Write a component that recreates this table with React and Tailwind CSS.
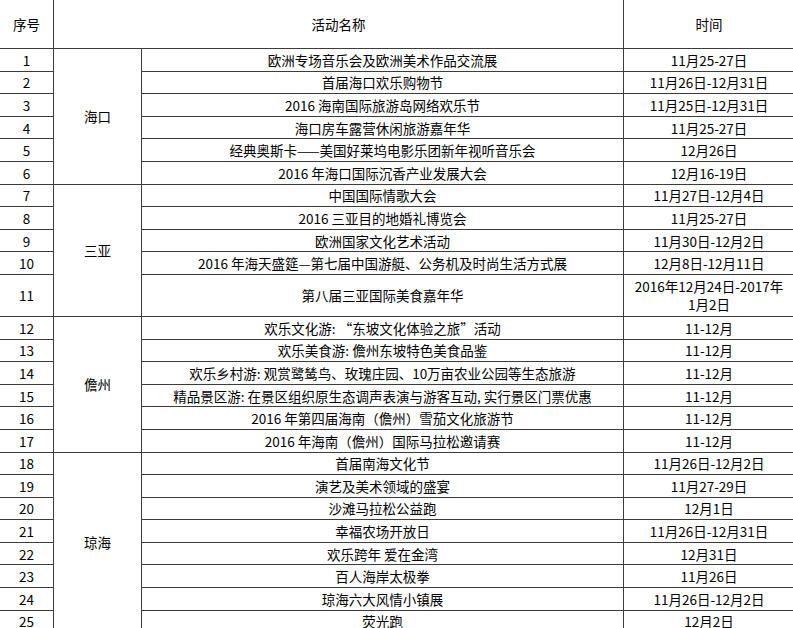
const groups = [
  {
    region: "海口",
    rows: [
      ["1", "欧洲专场音乐会及欧洲美术作品交流展", "11月25-27日"],
      ["2", "首届海口欢乐购物节", "11月26日-12月31日"],
      ["3", "2016 海南国际旅游岛网络欢乐节", "11月25日-12月31日"],
      ["4", "海口房车露营休闲旅游嘉年华", "11月25-27日"],
      ["5", "经典奥斯卡——美国好莱坞电影乐团新年视听音乐会", "12月26日"],
      ["6", "2016 年海口国际沉香产业发展大会", "12月16-19日"],
    ],
  },
  {
    region: "三亚",
    rows: [
      ["7", "中国国际情歌大会", "11月27日-12月4日"],
      ["8", "2016 三亚目的地婚礼博览会", "11月25-27日"],
      ["9", "欧洲国家文化艺术活动", "11月30日-12月2日"],
      ["10", "2016 年海天盛筵—第七届中国游艇、公务机及时尚生活方式展", "12月8日-12月11日"],
      ["11", "第八届三亚国际美食嘉年华", "2016年12月24日-2017年|1月2日"],
    ],
  },
  {
    region: "儋州",
    rows: [
      ["12", "欢乐文化游: “东坡文化体验之旅”活动", "11-12月"],
      ["13", "欢乐美食游: 儋州东坡特色美食品鉴", "11-12月"],
      ["14", "欢乐乡村游: 观赏鹭鸶鸟、玫瑰庄园、10万亩农业公园等生态旅游", "11-12月"],
      ["15", "精品景区游: 在景区组织原生态调声表演与游客互动, 实行景区门票优惠", "11-12月"],
      ["16", "2016 年第四届海南（儋州）雪茄文化旅游节", "11-12月"],
      ["17", "2016 年海南（儋州）国际马拉松邀请赛", "11-12月"],
    ],
  },
  {
    region: "琼海",
    rows: [
      ["18", "首届南海文化节", "11月26日-12月2日"],
      ["19", "演艺及美术领域的盛宴", "11月27-29日"],
      ["20", "沙滩马拉松公益跑", "12月1日"],
      ["21", "幸福农场开放日", "11月26日-12月31日"],
      ["22", "欢乐跨年 爱在金湾", "12月31日"],
      ["23", "百人海岸太极拳", "11月26日"],
      ["24", "琼海六大风情小镇展", "11月26日-12月2日"],
      ["25", "荧光跑", "12月2日"],
    ],
  },
];

const cell = "border border-[#3c3c3c] text-center align-middle p-0 leading-[18px]";

export default function App() {
  return (
    <div
      className="w-[793px] h-[628px] overflow-hidden bg-white text-black"
      style={{ fontFamily: '"Noto Sans CJK SC", "Noto Sans", sans-serif' }}
    >
      <table className="table-fixed border-collapse text-[13.5px] w-[795px] ml-[-1px] mt-[-1px]">
        <colgroup>
          <col className="w-[54px]" />
          <col className="w-[88px]" />
          <col className="w-[482px]" />
          <col className="w-[171px]" />
        </colgroup>
        <thead>
          <tr>
            <th className={`${cell} h-[49px] font-normal`}>序号</th>
            <th className={`${cell} font-normal`} colSpan={2}>活动名称</th>
            <th className={`${cell} font-normal`}>时间</th>
          </tr>
        </thead>
        <tbody>
          {groups.map((g) =>
            g.rows.map(([no, name, time], i) => {
              const tall = time.includes("|");
              return (
                <tr key={no}>
                  <td className={`${cell} ${tall ? "h-[42px]" : "h-[22.6px]"}`}>{no}</td>
                  {i === 0 && (
                    <td className={cell} rowSpan={g.rows.length}>
                      {g.region}
                    </td>
                  )}
                  <td className={`${cell} whitespace-nowrap`}>{name}</td>
                  <td className={`${cell} whitespace-nowrap ${tall ? "leading-[17px]" : ""}`}>
                    {tall ? (
                      <>
                        {time.split("|")[0]}
                        <br />
                        {time.split("|")[1]}
                      </>
                    ) : (
                      time
                    )}
                  </td>
                </tr>
              );
            })
          )}
        </tbody>
      </table>
    </div>
  );
}
